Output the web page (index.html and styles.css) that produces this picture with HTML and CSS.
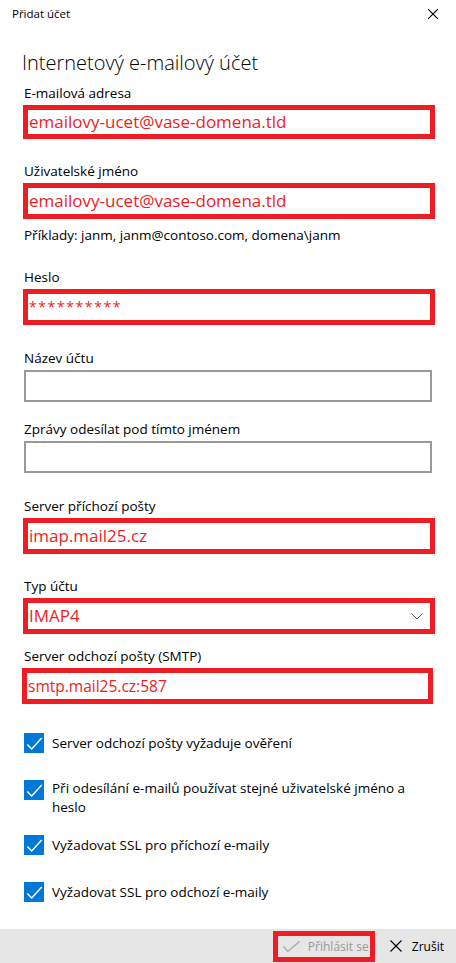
FILE: index.html
```
<!DOCTYPE html>
<html lang="cs">

<head>
    <meta charset="UTF-8">
    <meta name="viewport" content="width=device-width, initial-scale=1.0">
    <title>Přidat účet</title>
    <link rel="stylesheet" href="styles.css">
</head>

<body>
    <div class="window">
        <div class="titlebar">
            <span class="title">Přidat účet</span>
            <svg class="close" width="10" height="10" viewBox="0 0 10 10">
                <path d="M0 0L10 10M10 0L0 10" stroke="#000" stroke-width="1.1" fill="none" />
            </svg>
        </div>

        <div class="content">
            <h1>Internetový e-mailový účet</h1>

            <div class="field first">
                <div class="label">E-mailová adresa</div>
                <div class="input marked">emailovy-ucet@vase-domena.tld</div>
            </div>

            <div class="field">
                <div class="label">Uživatelské jméno</div>
                <div class="input marked">emailovy-ucet@vase-domena.tld</div>
                <div class="hint">Příklady: janm, janm@contoso.com, domena\janm</div>
            </div>

            <div class="field">
                <div class="label">Heslo</div>
                <div class="input marked password">**********</div>
            </div>

            <div class="field wide">
                <div class="label">Název účtu</div>
                <div class="input"></div>
            </div>

            <div class="field near">
                <div class="label">Zprávy odesílat pod tímto jménem</div>
                <div class="input"></div>
            </div>

            <div class="field wide">
                <div class="label">Server příchozí pošty</div>
                <div class="input marked">imap.mail25.cz</div>
            </div>

            <div class="field">
                <div class="label">Typ účtu</div>
                <div class="input marked select">
                    <span>IMAP4</span>
                    <svg width="12" height="7" viewBox="0 0 12 7">
                        <polyline points="0.5,0.5 6,6 11.5,0.5" stroke="#666" stroke-width="1" fill="none" />
                    </svg>
                </div>
            </div>

            <div class="field tight">
                <div class="label">Server odchozí pošty (SMTP)</div>
                <div class="input marked shift small">smtp.mail25.cz:587</div>
            </div>

            <div class="checks">
                <div class="check">
                    <span class="box">
                        <svg width="20" height="20" viewBox="0 0 20 20">
                            <polyline points="3.3,11.5 7.7,16 17.7,5" stroke="#fff" stroke-width="1.5" fill="none" />
                        </svg>
                    </span>
                    <span class="text">Server odchozí pošty vyžaduje ověření</span>
                </div>
                <div class="check multi">
                    <span class="box">
                        <svg width="20" height="20" viewBox="0 0 20 20">
                            <polyline points="3.3,11.5 7.7,16 17.7,5" stroke="#fff" stroke-width="1.5" fill="none" />
                        </svg>
                    </span>
                    <span class="text">Při odesílání e-mailů používat stejné uživatelské jméno a heslo</span>
                </div>
                <div class="check">
                    <span class="box">
                        <svg width="20" height="20" viewBox="0 0 20 20">
                            <polyline points="3.3,11.5 7.7,16 17.7,5" stroke="#fff" stroke-width="1.5" fill="none" />
                        </svg>
                    </span>
                    <span class="text">Vyžadovat SSL pro příchozí e-maily</span>
                </div>
                <div class="check">
                    <span class="box">
                        <svg width="20" height="20" viewBox="0 0 20 20">
                            <polyline points="3.3,11.5 7.7,16 17.7,5" stroke="#fff" stroke-width="1.5" fill="none" />
                        </svg>
                    </span>
                    <span class="text">Vyžadovat SSL pro odchozí e-maily</span>
                </div>
            </div>
        </div>

        <div class="footer">
            <div class="btn disabled">
                <svg width="17" height="11" viewBox="0 0 17 11">
                    <polyline points="0.5,5.5 4.8,10.5 16.5,0.5" stroke="#a6a6a6" stroke-width="1.2" fill="none" />
                </svg>
                <span>Přihlásit se</span>
            </div>
            <div class="btn cancel">
                <svg width="12" height="12" viewBox="0 0 12 12">
                    <path d="M0.5 0.5L11.5 11.5M11.5 0.5L0.5 11.5" stroke="#000" stroke-width="1.1" fill="none" />
                </svg>
                <span>Zrušit</span>
            </div>
        </div>
    </div>
</body>

</html>
```

FILE: styles.css
```
* {
    margin: 0;
    padding: 0;
    box-sizing: border-box;
}

body {
    font-family: "Segoe UI", "Open Sans", sans-serif;
    color: #000;
    background: #fff;
}

.window {
    height: 100vh;
    display: flex;
    flex-direction: column;
}

.titlebar {
    height: 32px;
    display: flex;
    align-items: center;
    justify-content: space-between;
    padding: 0 18px 0 12px;
}

.title {
    font-size: 11.5px;
}

.content {
    flex: 1;
    padding: 0 24px;
}

h1 {
    font-size: 20px;
    font-weight: 300;
    line-height: 28px;
    margin: 22px 0 6px -2px;
}

.field {
    margin-top: 22px;
}

.field.first {
    margin-top: 0;
}

.field.wide {
    margin-top: 23px;
}

.field.near {
    margin-top: 17px;
}

.field.tight {
    margin-top: 12px;
}

.label,
.hint {
    font-size: 13.5px;
    line-height: 20px;
}

.hint {
    margin-top: 6px;
}

.input {
    margin-top: 2px;
    height: 32px;
    width: 408px;
    border: 2px solid #999;
}

.input.marked {
    height: 36px;
    width: 412px;
    margin-left: -1px;
    border: 5px solid #ee1d24;
    color: #ee1d24;
    font-size: 17px;
    line-height: 26px;
    padding-left: 1px;
}

.first .input.marked {
    height: 34px;
    line-height: 24px;
}

.input.small {
    font-size: 15.5px;
}

.input.shift {
    margin-left: -2px;
    width: 411px;
}

.input.password {
    font-size: 14px;
    letter-spacing: 1.6px;
}

.input.select {
    display: flex;
    align-items: center;
    justify-content: space-between;
    padding-right: 7px;
}

.checks {
    margin-top: 29px;
}

.check {
    display: flex;
    align-items: flex-start;
    gap: 8px;
    margin-bottom: 27px;
}

.check.multi {
    margin-bottom: 18px;
}

.check .box {
    width: 20px;
    height: 20px;
    flex: none;
    background: #0078d7;
    display: flex;
}

.check .text {
    font-size: 13.5px;
    line-height: 20px;
    max-width: 360px;
}

.check.multi .text {
    line-height: 19px;
    margin-top: -1px;
}

.footer {
    height: 40px;
    background: #e6e6e6;
    display: flex;
    align-items: center;
    justify-content: flex-end;
    padding-right: 12px;
    gap: 15px;
}

.btn {
    display: flex;
    align-items: center;
    font-size: 12px;
    white-space: nowrap;
}

.btn.disabled {
    height: 31px;
    width: 102px;
    border: 5px solid #ee1d24;
    padding-left: 5px;
    gap: 8px;
    color: #999;
}

.btn.cancel {
    gap: 10px;
}
```
